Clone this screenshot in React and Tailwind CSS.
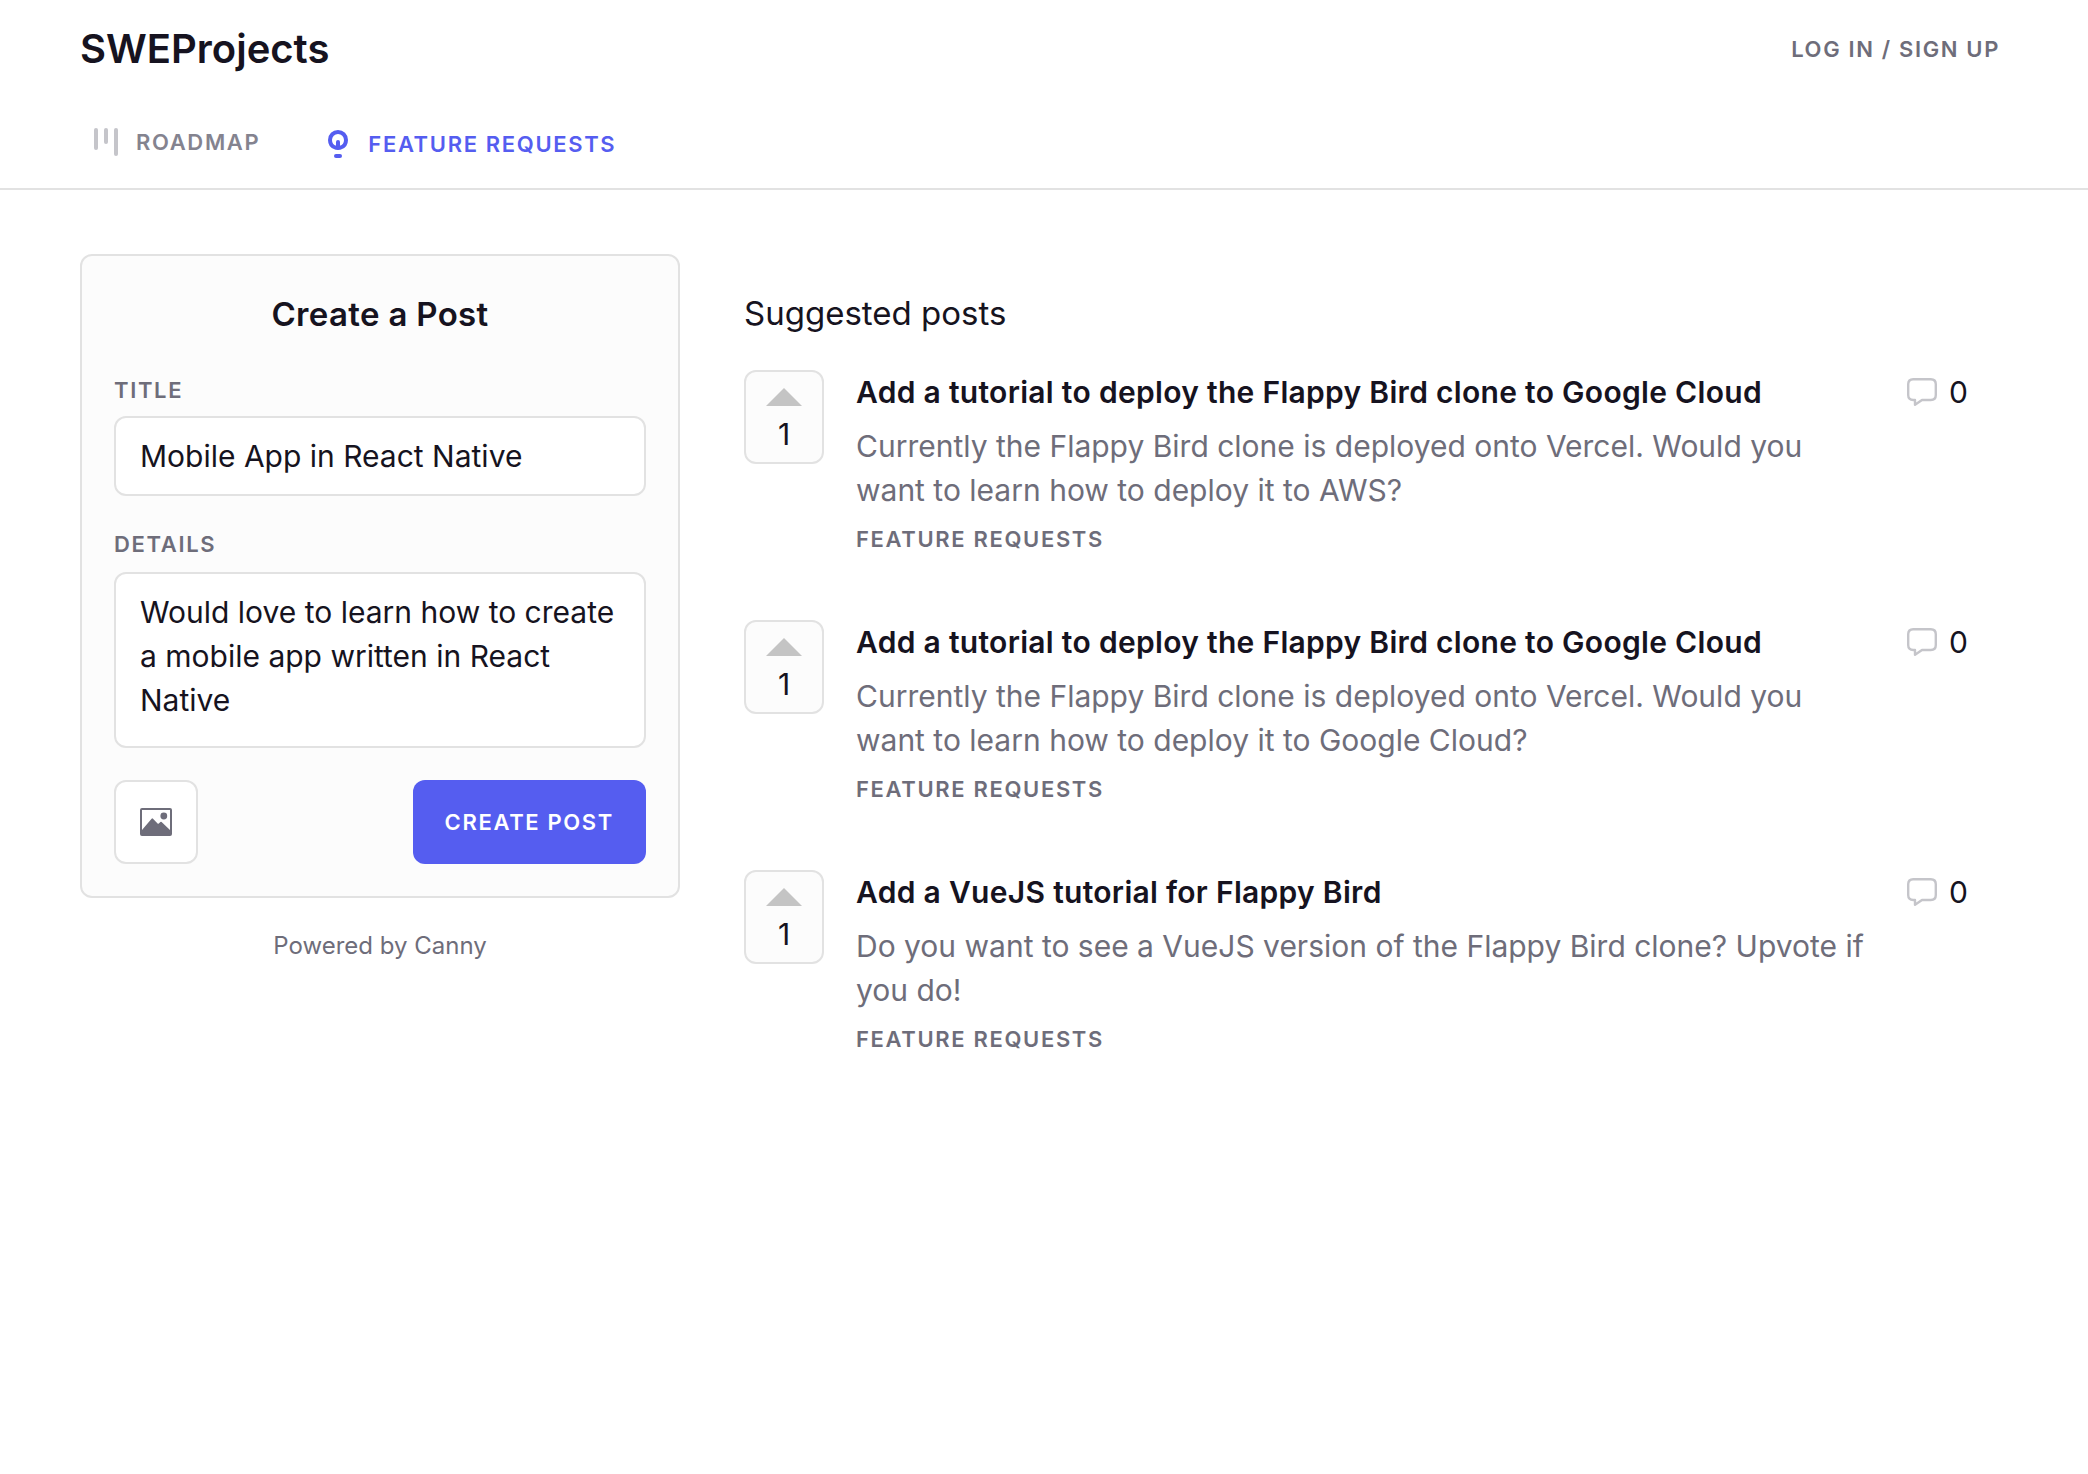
import React from "react";

const posts = [
  {
    id: "aws",
    title: "Add a tutorial to deploy the Flappy Bird clone to Google Cloud",
    details:
      "Currently the Flappy Bird clone is deployed onto Vercel. Would you want to learn how to deploy it to AWS?",
  },
  {
    id: "gcp",
    title: "Add a tutorial to deploy the Flappy Bird clone to Google Cloud",
    details:
      "Currently the Flappy Bird clone is deployed onto Vercel. Would you want to learn how to deploy it to Google Cloud?",
  },
  {
    id: "vue",
    title: "Add a VueJS tutorial for Flappy Bird",
    details:
      "Do you want to see a VueJS version of the Flappy Bird clone? Upvote if you do!",
  },
];

function RoadmapIcon() {
  return (
    <svg width="26" height="28" viewBox="0 0 26 28" fill="#c5c5ca" aria-hidden="true">
      <rect x="0" y="0" width="4" height="22" rx="2" />
      <rect x="10" y="0" width="4" height="16" rx="2" />
      <rect x="20" y="0" width="4" height="28" rx="2" />
    </svg>
  );
}

function BulbIcon() {
  return (
    <svg width="20" height="28" viewBox="0 0 20 28" fill="none" stroke="currentColor" aria-hidden="true">
      <path
        d="M7.6 17.7C4.3 16.7 2 13.6 2 10C2 5.3 5.6 2 10 2S18 5.3 18 10C18 13.6 15.7 16.7 12.4 17.7Z"
        strokeWidth="4"
        strokeLinejoin="round"
      />
      <path d="M10 12V18" strokeWidth="4" strokeLinecap="round" />
      <path d="M8 26H12" strokeWidth="4" strokeLinecap="round" />
    </svg>
  );
}

function ImageIcon() {
  return (
    <svg width="32" height="28" viewBox="0 0 32 28" aria-hidden="true">
      <rect x="1" y="1" width="30" height="26" rx="1" fill="none" stroke="#6e6d7a" strokeWidth="2" />
      <path d="M2 22L11.6 10.7Q12.3 10 13 10.7L17.6 15.6Q18.2 16 18.8 15.5L20.4 14Q21 13.500 21.600 14L30 22V27H2Z" fill="#6e6d7a" />
      <circle cx="23.8" cy="8" r="3.4" fill="#6e6d7a" />
    </svg>
  );
}

function CommentIcon() {
  return (
    <svg width="30" height="28" viewBox="0 0 30 28" fill="none" stroke="#c5c5ca" strokeWidth="2.4" strokeLinejoin="round" aria-hidden="true">
      <path d="M6.2 1.2H23.8Q28.8 1.2 28.8 6.2V17Q28.8 22 23.8 22H15L8 26.8V22H6.2Q1.2 22 1.2 17V6.2Q1.2 1.2 6.2 1.2Z" />
    </svg>
  );
}

function Post({ post }) {
  return (
    <li className="flex items-start">
      <button
        type="button"
        aria-label="Upvote, 1 vote"
        className="flex h-[94px] w-20 shrink-0 flex-col items-center rounded-xl border-2 border-[#e2e2e2] bg-[#fcfcfc] pt-4"
      >
        <svg width="36" height="18" viewBox="0 0 36 18" fill="#c4c4c4" aria-hidden="true">
          <path d="M18 0L36 18H0Z" />
        </svg>
        <span className="mt-1.5 leading-11">1</span>
      </button>
      <div className="ml-8 min-w-0 flex-1">
        <h3 className="font-semibold leading-11 tracking-[0.01em]">
          <a href="#post">{post.title}</a>
        </h3>
        <p className="mt-2.5 leading-11 text-[#6e6d7a]">{post.details}</p>
        <p className="mt-[11px] text-[22px] font-semibold leading-8 tracking-[0.075em] text-[#6e6d7a]">FEATURE REQUESTS</p>
      </div>
      <div className="ml-8 mr-10 flex shrink-0 items-center gap-3">
        <CommentIcon />
        <span className="leading-11">0</span>
      </div>
    </li>
  );
}

export default function App() {
  return (
    <div className="min-h-screen bg-white font-['Inter',sans-serif] text-[30px] text-[#161320]">
      <header className="border-b-2 border-[#e2e2e2] px-20">
        <div className="flex h-[98px] items-center justify-between">
          <h1 className="text-[40px] font-semibold leading-12">
            <a href="#home">SWEProjects</a>
          </h1>
          <a href="#login" className="mr-2 text-[22px] font-semibold leading-8 tracking-[0.075em] text-[#6e6d7a]">
            LOG IN / SIGN UP
          </a>
        </div>
        <nav className="flex h-[90px] items-center pb-0.5 text-[22px] font-semibold leading-8 tracking-[0.075em]">
          <a href="#roadmap" className="ml-3.5 flex items-center gap-4 text-[#84838f]">
            <RoadmapIcon />
            <span>ROADMAP</span>
          </a>
          <a href="#requests" className="ml-17 flex items-center gap-5 pt-1 text-[#555df0]">
            <BulbIcon />
            <span>FEATURE REQUESTS</span>
          </a>
        </nav>
      </header>

      <main className="flex items-start gap-16 px-20 pt-16">
        <aside className="w-[600px] shrink-0">
          <form
            className="rounded-xl border-2 border-[#e2e2e2] bg-[#fcfcfc] p-8"
            onSubmit={(e) => e.preventDefault()}
          >
            <h2 className="mt-0.5 text-center text-[33px] font-semibold leading-12 tracking-[0.01em]">Create a Post</h2>
            <label htmlFor="title" className="mt-9 block text-[22px] font-semibold leading-8 tracking-[0.075em] text-[#6e6d7a]">
              TITLE
            </label>
            <input
              id="title"
              type="text"
              defaultValue="Mobile App in React Native"
              className="mt-2.5 block h-20 w-full rounded-xl border-2 border-[#e2e2e2] bg-white px-6 outline-none"
            />
            <label htmlFor="details" className="mt-8 block text-[22px] font-semibold leading-8 tracking-[0.075em] text-[#6e6d7a]">
              DETAILS
            </label>
            <textarea
              id="details"
              rows={3}
              defaultValue="Would love to learn how to create a mobile app written in React Native"
              className="mt-3 block h-44 w-full resize-none overflow-hidden rounded-xl border-2 border-[#e2e2e2] bg-white px-6 py-4 leading-11 outline-none"
            />
            <div className="mt-8 flex justify-between">
              <button
                type="button"
                aria-label="Add image"
                className="flex size-21 items-center justify-center rounded-xl border-2 border-[#e2e2e2] bg-white"
              >
                <ImageIcon />
              </button>
              <button
                type="submit"
                className="h-21 rounded-xl bg-[#555df0] px-8 text-[22px] font-semibold leading-8 tracking-[0.075em] text-white"
              >
                CREATE POST
              </button>
            </div>
          </form>
          <p className="mt-8 text-center text-2xl leading-8 text-[#6e6d7a]">
            <a href="#canny">Powered by Canny</a>
          </p>
        </aside>

        <section className="min-w-0 flex-1 pt-[35px]">
          <h2 className="text-[33px] leading-12">Suggested posts</h2>
          <ul className="mt-[33px] flex flex-col gap-[65px]">
            {posts.map((post) => (
              <Post key={post.id} post={post} />
            ))}
          </ul>
        </section>
      </main>
    </div>
  );
}
